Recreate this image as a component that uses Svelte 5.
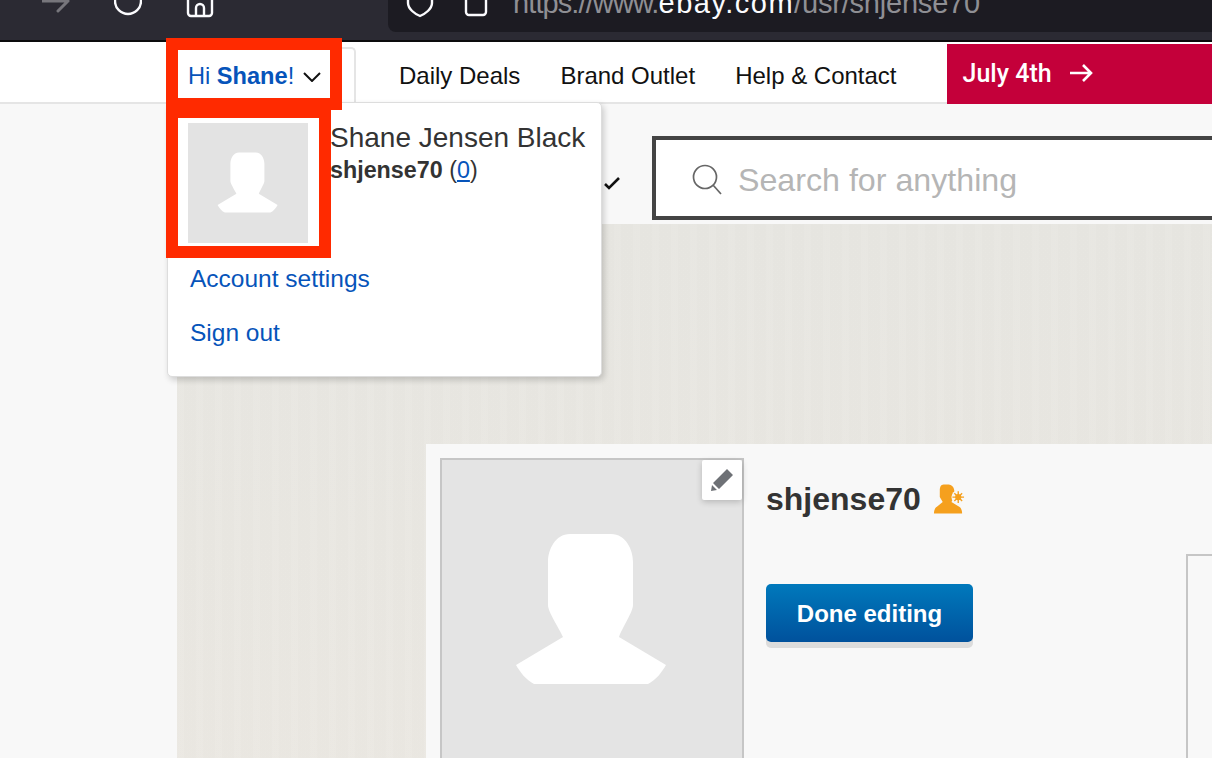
<script>
  const navLinks = ["Daily Deals", "Brand Outlet", "Help & Contact"];
  // silhouette used by both avatars, 300 unit box
  const person = "M128 74H169C184 74 191 90 191 102V145C191 152 180 168 177 177L224 205C220 212 214 220 206 224H92C84 220 78 212 74 205L121 177C117 168 106 152 106 145V102C106 90 113 74 128 74Z";
</script>

<div class="page">
  <div class="chrome">
    <svg class="tb forward" viewBox="0 0 28 16" width="28" height="16"><path d="M0 1H26M16 -9L26 1L16 11" /></svg>
    <svg class="tb reload" viewBox="0 0 28 16" width="28" height="16"><circle cx="14" cy="1" r="13" /></svg>
    <svg class="tb home" viewBox="0 0 28 18" width="28" height="18"><path d="M2 -4V13A3 3 0 0 0 5 16H23A3 3 0 0 0 26 13V-4M10 16V8A4 4 0 0 1 18 8V16" /></svg>
    <div class="urlbar">
      <svg class="tb shield" viewBox="0 0 28 18" width="28" height="18"><path d="M2 -6V3C2 9 9 14 14 16C19 14 26 9 26 3V-6" /></svg>
      <svg class="tb lock" viewBox="0 0 24 18" width="24" height="18"><path d="M2 -4H22V12A3 3 0 0 1 19 15H5A3 3 0 0 1 2 12Z" /></svg>
      <span class="url"><span class="scheme">https://www.</span><b>ebay.com</b><span class="path">/usr/shjense70</span></span>
    </div>
  </div>

  <nav class="topnav">
    <div class="greeting">
      <span class="hi">Hi <b>Shane</b>!</span>
      <svg class="caret" viewBox="0 0 18 10" width="18" height="10"><path d="M1 1L9 9L17 1" /></svg>

      <div class="menu">
        <div class="who">
          <div class="mini-avatar">
            <svg viewBox="0 0 300 300" width="120" height="120"><path d={person} fill="#fff" /></svg>
          </div>
          <div class="names">
            <div class="fullname">Shane Jensen Black</div>
            <div class="handle"><b>shjense70</b> (<a href="#0">0</a>)</div>
          </div>
        </div>
        <a class="menu-link" href="#settings">Account settings</a>
        <a class="menu-link" href="#signout">Sign out</a>
      </div>
    </div>

    <ul class="links">
      {#each navLinks as link}
        <li>{link}</li>
      {/each}
    </ul>

    <div class="promo">
      <span>July 4th</span>
      <svg viewBox="0 0 24 18" width="24" height="18"><path d="M1 9H22M14 1L22 9L14 17" /></svg>
    </div>
  </nav>

  <div class="content">
    <header class="searchrow">
      <svg class="chev" viewBox="0 0 18 14" width="18" height="14"><path d="M2 8L6 12L16 2" /></svg>
      <div class="search">
        <svg viewBox="0 0 30 32" width="30" height="32"><circle cx="13" cy="13" r="11.5" /><path d="M21 21L29 30" /></svg>
        <span>Search for anything</span>
      </div>
    </header>

    <section class="hero">
      <div class="card">
        <div class="avatar">
          <svg viewBox="0 0 300 300" width="300" height="300"><path d={person} fill="#fff" /></svg>
          <button class="edit" aria-label="Edit photo">
            <svg viewBox="0 0 24 24" width="24" height="24"><path d="M17 1L23 7L9 21L3 15ZM2 17L7 22L1 23Z" fill="#6e7176" /></svg>
          </button>
        </div>
        <div class="details">
          <h1>shjense70
            <svg viewBox="0 0 34 32" width="33" height="32">
              <path d="M11 1H16C20 1 22 5 22 8V14L19 19L27 24C29 25 30 28 30 31H1C1 28 2 25 4 24L10 19L7 14V7C7 4 8 1 11 1Z" fill="#f5a01e" />
              <circle cx="26" cy="14" r="7" fill="#f8f8f8" />
              <circle cx="26" cy="14" r="3.2" fill="#f5a01e" />
              <path d="M26 8V20M20 14H32M22 10L30 18M30 10L22 18" stroke="#f5a01e" stroke-width="1.4" />
            </svg>
          </h1>
          <button class="done">Done editing</button>
        </div>
        <div class="sidebox"></div>
      </div>
    </section>
  </div>

  <!-- red annotation boxes from the screenshot -->
  <div class="mark mark-top"></div>
  <div class="mark mark-avatar"></div>
</div>

<style>
  :global(body) {
    margin: 0;
    background: #f8f8f8;
  }

  .page {
    position: relative;
    width: 1212px;
    height: 758px;
    overflow: hidden;
    font-family: "Liberation Sans", Arial, sans-serif;
    color: #333;
    background: #f8f8f8;
  }

  /* browser toolbar, cut off at the top */
  .chrome {
    display: flex;
    height: 40px;
    background: #2b2a33;
    border-bottom: 2px solid #0c0c0d;
  }

  .tb {
    fill: none;
    stroke: #fbfbfe;
    stroke-width: 2.4;
    stroke-linecap: round;
    stroke-linejoin: round;
    flex: none;
  }

  .forward {
    margin-left: 42px;
    stroke: #77767c;
    stroke-width: 3;
  }

  .reload {
    margin-left: 44px;
  }

  .home {
    margin-left: 44px;
  }

  .urlbar {
    display: flex;
    flex: 1;
    height: 32px;
    margin-left: 174px;
    background: #1c1b22;
    border-bottom-left-radius: 8px;
  }

  .shield {
    margin-left: 18px;
  }

  .lock {
    margin-left: 30px;
  }

  .url {
    margin: -13px 0 0 25px;
    font-size: 29px;
    line-height: 32px;
    color: #8f8f94;
    white-space: nowrap;
  }

  .scheme {
    letter-spacing: -0.9px;
  }

  .path {
    letter-spacing: -0.2px;
  }

  .url b {
    font-weight: 400;
    letter-spacing: 1.5px;
    color: #fbfbfe;
  }

  /* ebay nav */
  .topnav {
    display: flex;
    height: 60px;
    background: #fff;
    border-bottom: 2px solid #e5e5e5;
    box-sizing: content-box;
  }

  .greeting {
    position: relative;
    display: flex;
    align-items: center;
    box-sizing: border-box;
    width: 179px;
    height: 57px;
    margin: 5px 0 0 177px;
    padding: 0 0 0 11px;
    background: #fff;
    border: 2px solid #e5e5e5;
    border-bottom: 0;
    border-left: 0;
    border-top-right-radius: 5px;
    z-index: 2;
  }

  .hi {
    font-size: 23.6px;
    color: #0654ba;
    white-space: nowrap;
  }

  .caret {
    margin-left: 9px;
    fill: none;
    stroke: #111;
    stroke-width: 2;
  }

  .menu {
    position: absolute;
    left: -10px;
    top: 53px;
    box-sizing: border-box;
    width: 435px;
    height: 275px;
    padding: 20px 0 0 20px;
    background: #fff;
    border: 1px solid #ddd;
    border-radius: 5px;
    box-shadow: 2px 3px 6px rgba(0, 0, 0, 0.18);
  }

  .who {
    display: flex;
    gap: 22px;
    height: 141px;
  }

  .mini-avatar {
    width: 120px;
    height: 120px;
    background: #e3e3e3;
  }

  .mini-avatar svg {
    display: block;
  }

  .fullname {
    margin-top: -1px;
    font-size: 28px;
    line-height: 32px;
    white-space: nowrap;
  }

  .handle {
    margin-top: 1px;
    font-size: 23.3px;
    line-height: 30px;
    white-space: nowrap;
  }

  .handle a {
    color: #0654ba;
  }

  .menu-link {
    display: block;
    height: 54px;
    margin-left: 2px;
    font-size: 24.5px;
    line-height: 30px;
    color: #0654ba;
    text-decoration: none;
    white-space: nowrap;
  }

  .links {
    display: flex;
    gap: 40px;
    margin: 0 0 0 43px;
    padding: 7px 0 0;
    list-style: none;
    align-items: center;
    font-size: 24px;
    color: #111;
    white-space: nowrap;
  }

  .promo {
    display: flex;
    flex: 1;
    align-items: center;
    gap: 17px;
    height: 60px;
    margin: 2px 0 -2px 50px;
    padding: 0 0 2px 16px;
    box-sizing: border-box;
    background: #c4003a;
    color: #fff;
    font-family: Roboto, "Liberation Sans", sans-serif;
    font-size: 25px;
    font-weight: 500;
  }

  .promo svg {
    fill: none;
    stroke: #fff;
    stroke-width: 2.6;
  }

  .content {
    display: flex;
    flex-direction: column;
  }

  .searchrow {
    display: flex;
    align-items: flex-start;
    height: 120px;
    padding-top: 32px;
    box-sizing: border-box;
    background: #f8f8f8;
  }

  .chev {
    margin: 40px 0 0 603px;
    fill: none;
    stroke: #111;
    stroke-width: 2.6;
    flex: none;
  }

  .search {
    display: flex;
    align-items: center;
    flex: none;
    gap: 16px;
    box-sizing: border-box;
    width: 700px;
    height: 84px;
    margin-left: 31px;
    padding: 4px 0 0 36px;
    background: #fff;
    border: 4px solid #444;
    font-size: 32.2px;
    color: #b5b5b5;
    white-space: nowrap;
  }

  .search svg {
    fill: none;
    stroke: #666;
    stroke-width: 1.7;
    flex: none;
  }

  .hero {
    flex: 1;
    height: 534px;
    margin-left: 177px;
    padding: 220px 0 0 249px;
    box-sizing: border-box;
    background:
      repeating-linear-gradient(90deg, rgba(255, 255, 255, 0.03) 0 7px, rgba(0, 0, 0, 0.004) 7px 19px),
      linear-gradient(180deg, #e7e6e1, #ebe8e2);
  }

  .card {
    display: flex;
    width: 900px;
    height: 400px;
    padding: 14px 0 0 14px;
    background: #f8f8f8;
    box-sizing: border-box;
  }

  .avatar {
    position: relative;
    flex: none;
    width: 300px;
    height: 400px;
    background: #e4e4e4;
    border: 2px solid #c6c6c6;
  }

  .avatar > svg {
    display: block;
  }

  .edit {
    position: absolute;
    top: 0;
    right: 0;
    display: flex;
    align-items: center;
    justify-content: center;
    width: 40px;
    height: 40px;
    padding: 0;
    background: #fff;
    border: 0;
    border-radius: 2px;
    box-shadow: 0 2px 6px rgba(0, 0, 0, 0.2);
  }

  .details {
    flex: none;
    width: 420px;
    margin-left: 22px;
  }

  h1 {
    display: flex;
    align-items: center;
    gap: 12px;
    height: 32px;
    margin: 25px 0 0;
    font-size: 32px;
    font-weight: 700;
    color: #333;
  }

  .done {
    display: block;
    width: 207px;
    height: 58px;
    margin-top: 69px;
    padding: 2px 0 0;
    border: 0;
    border-radius: 5px;
    background: linear-gradient(180deg, #0079bc, #00519c);
    box-shadow: 0 6px 0 #dcdcdc;
    color: #fff;
    font-family: inherit;
    font-size: 24px;
    font-weight: 700;
  }

  .sidebox {
    width: 200px;
    height: 300px;
    margin: 96px 0 0 0;
    border: 2px solid #c6c6c6;
    flex: none;
  }

  .mark {
    position: absolute;
    box-sizing: border-box;
    border: 12px solid #ff2a00;
    z-index: 5;
  }

  .mark-top {
    left: 166px;
    top: 38px;
    width: 176px;
    height: 72px;
  }

  .mark-avatar {
    left: 166px;
    top: 106px;
    width: 165px;
    height: 152px;
  }
</style>
